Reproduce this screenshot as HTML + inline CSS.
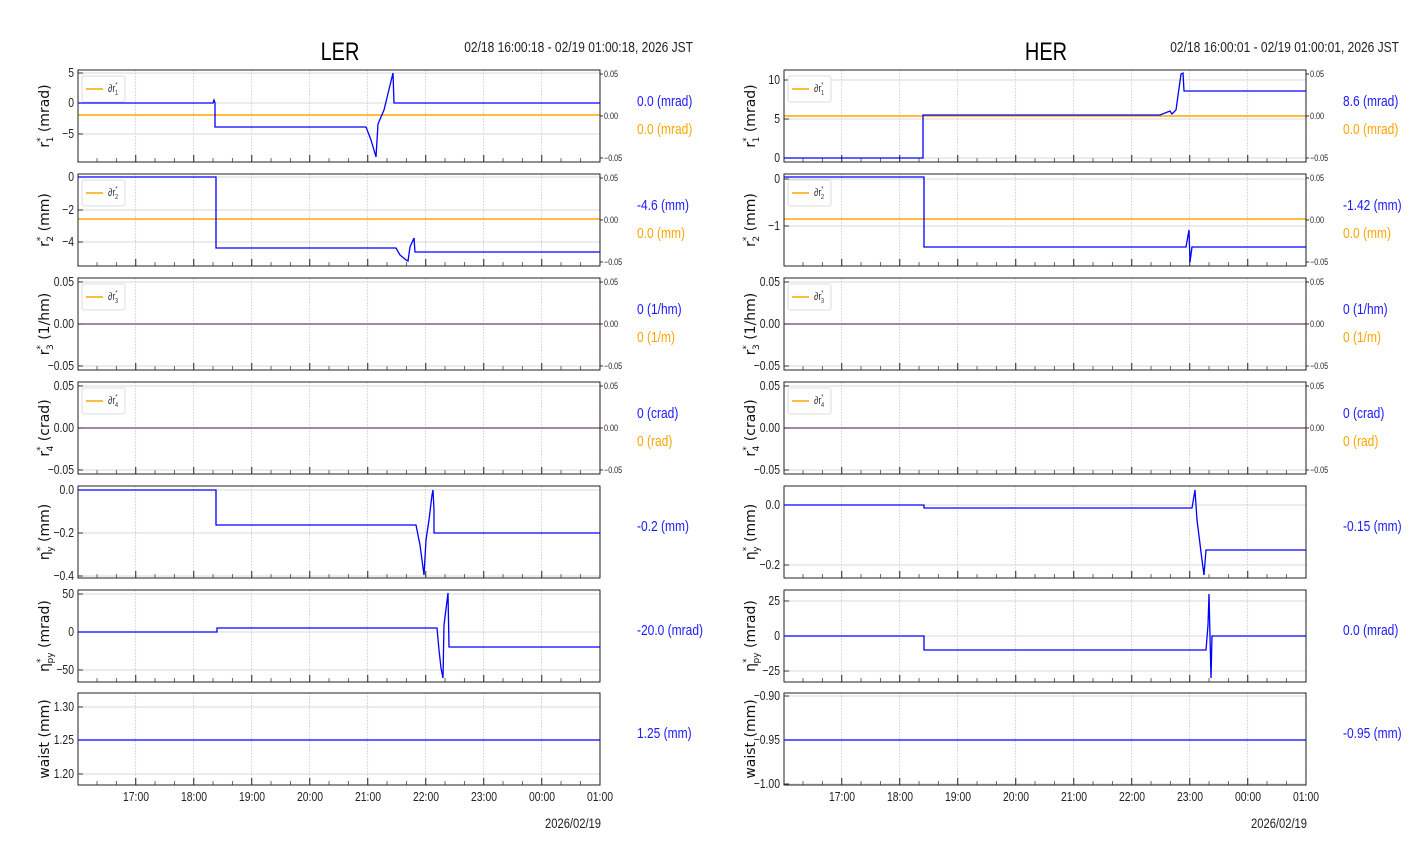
<!DOCTYPE html>
<html><head><meta charset="utf-8"><style>
html,body{margin:0;padding:0;background:#fff;width:1412px;height:864px;overflow:hidden}
svg{display:block}
</style></head><body>
<svg id="s" width="1412" height="864" xmlns="http://www.w3.org/2000/svg" font-family="Liberation Sans, sans-serif"></svg>
<script>
const S=document.getElementById('s');let h='';
const tops=[70,174,278,382,486,590,693];const H=92;
function T(x,y,fs,anc,fill,c,sx){sx=sx||0.8;return `<text transform="translate(${x},${y}) scale(${sx},1)" font-size="${fs}" text-anchor="${anc}" fill="${fill}">${c}</text>`;}
function side(x0,title,date,yt,curves,orange,vals,ylab){
 const x1=x0+522;
 h+=T(x0+262,60,25,'middle','#000',title);
 h+=T(x1+93,52,15,'end','#222',date);
 tops.forEach((t,i)=>{
  const b=t+H;
  for(let k=1;k<=9;k++){const x=x0+58*k-0.3;h+=`<line x1="${x}" y1="${t}" x2="${x}" y2="${b}" stroke="#bbb" stroke-width="0.7" stroke-dasharray="1.5,1.5"/>`;}
  yt[i].forEach(([y,l])=>{h+=`<line x1="${x0}" y1="${y}" x2="${x1}" y2="${y}" stroke="#ccc" stroke-width="0.7"/>`;
   h+=`<line x1="${x0}" y1="${y}" x2="${x0+5}" y2="${y}" stroke="#333"/>`;
   h+=T(x0-4,y+4,13,'end','#222',l);});
  for(let m=1;m<27;m++){const x=x0+58*m/3-0.3;const big=m%3==0;h+=`<line x1="${x}" y1="${b}" x2="${x}" y2="${b-(big?7:4)}" stroke="#444" stroke-width="${big?1.2:0.8}"/>`;}
  if(i<4){
   const ys=[t+4,t+46,t+88];const ls=['0.05','0.00','\u22120.05'];
   ys.forEach((y,j)=>{h+=`<line x1="${x1}" y1="${y}" x2="${x1+3}" y2="${y}" stroke="#333"/>`+T(x1+4,y+3,9,'start','#222',ls[j]);});
   h+=`<line x1="${x0}" y1="${orange[i]}" x2="${x1}" y2="${orange[i]}" stroke="#ffa500" stroke-width="1.5" ${i>=2?'opacity="0.8"':''}/>`;
   h+=`<rect x="${x0+4}" y="${t+6}" width="43" height="26" rx="2" fill="#fff" fill-opacity="0.85" stroke="#ddd"/>`;
   h+=`<line x1="${x0+8}" y1="${t+19}" x2="${x0+25}" y2="${t+19}" stroke="#ffa500" stroke-width="1.5"/>`;
   h+=T(x0+30,t+22,11,'start','#333',`\u2202r<tspan dy="-5" font-size="7">*</tspan><tspan dx="-3" dy="8" font-size="7">${i+1}</tspan>`);
  }
  h+=`<polyline points="${curves[i]}" fill="none" stroke="#0000ff" stroke-width="1.3" ${i>=2&&i<4?'opacity="0.55"':''}/>`;
  h+=`<rect x="${x0}" y="${t}" width="522" height="${H}" fill="none" stroke="#222" stroke-width="1"/>`;
  h+=`<text transform="translate(${x0-29},${t+46}) rotate(-90)" font-size="14" text-anchor="middle" style="font-family:'DejaVu Sans',sans-serif" fill="#111">${ylab[i]}</text>`;
  const vx=x1+37;
  if(i<4){h+=T(vx,t+36,15,'start','#1a1aff',vals[i][0])+T(vx,t+64,15,'start','#ffa500',vals[i][1]);}
  else h+=T(vx,t+45,15,'start','#1a1aff',vals[i][0]);
 });
 const lbl=['17:00','18:00','19:00','20:00','21:00','22:00','23:00','00:00','01:00'];
 lbl.forEach((l,k)=>{h+=T(x0+58*(k+1),801,13,'middle','#222',l);});
 h+=T(x1+1,828,14,'end','#222','2026/02/19');
}
const sub=(a,b,u)=>`${a}<tspan dy="-6" font-size="9">*</tspan><tspan dx="-5" dy="10" font-size="9">${b}</tspan><tspan dy="-4"> (${u})</tspan>`;
const yl=[sub('r','1','mrad'),sub('r','2','mm'),sub('r','3','1/hm'),sub('r','4','crad'),sub('\u03b7','y','mm'),sub('\u03b7','py','mrad'),'waist (mm)'];
const M='\u2212';
side(78,'LER','02/18 16:00:18 - 02/19 01:00:18, 2026 JST',
[[[73,'5'],[103,'0'],[134,M+'5']],[[177,'0'],[210,M+'2'],[242,M+'4']],[[282,'0.05'],[324,'0.00'],[366,M+'0.05']],[[386,'0.05'],[428,'0.00'],[470,M+'0.05']],[[490,'0.0'],[533,M+'0.2'],[576,M+'0.4']],[[594,'50'],[632,'0'],[670,M+'50']],[[707,'1.30'],[740,'1.25'],[774,'1.20']]],
['78,103 213,103 214,100 215,103 215,127 366,127 371,140 376,157 378,124 384,110 393,73 394,103 600,103',
'78,177 216,177 216,248 396,248 400,255 406,260 408,261 410,247 414,238 415,252 600,252',
'78,324 600,324','78,428 600,428',
'78,490 216,490 216,525 416,525 420,545 424,575 426,540 429,520 432,495 433,490 434,510 434,533 600,533',
'78,632 217,632 217,628 437,628 439,650 441,668 443,678 444,625 448,593 449,647 600,647',
'78,740 600,740'],
[115,219,324,428],
[['0.0 (mrad)','0.0 (mrad)'],['-4.6 (mm)','0.0 (mm)'],['0 (1/hm)','0 (1/m)'],['0 (crad)','0 (rad)'],['-0.2 (mm)'],['-20.0 (mrad)'],['1.25 (mm)']],yl);
side(784,'HER','02/18 16:00:01 - 02/19 01:00:01, 2026 JST',
[[[80,'10'],[119,'5'],[158,'0']],[[179,'0'],[226,M+'1']],[[282,'0.05'],[324,'0.00'],[366,M+'0.05']],[[386,'0.05'],[428,'0.00'],[470,M+'0.05']],[[505,'0.0'],[565,M+'0.2']],[[601,'25'],[636,'0'],[671,M+'25']],[[696,M+'0.90'],[740,M+'0.95'],[784,M+'1.00']]],
['784,158 923,158 923,115 1160,115 1170,111 1172,114 1176,110 1181,74 1183,73 1184,91 1306,91',
'784,177 924,177 924,247 1186,247 1189,230 1190,262 1192,247 1306,247',
'784,324 1306,324','784,428 1306,428',
'784,505 924,505 924,508 1192,508 1195,490 1197,520 1202,560 1204,575 1206,550 1306,550',
'784,636 924,636 924,650 1206,650 1208,625 1209,594 1211,678 1212,636 1306,636',
'784,740 1306,740'],
[116,219,324,428],
[['8.6 (mrad)','0.0 (mrad)'],['-1.42 (mm)','0.0 (mm)'],['0 (1/hm)','0 (1/m)'],['0 (crad)','0 (rad)'],['-0.15 (mm)'],['0.0 (mrad)'],['-0.95 (mm)']],yl);
S.innerHTML=h;
</script>
</body></html>
